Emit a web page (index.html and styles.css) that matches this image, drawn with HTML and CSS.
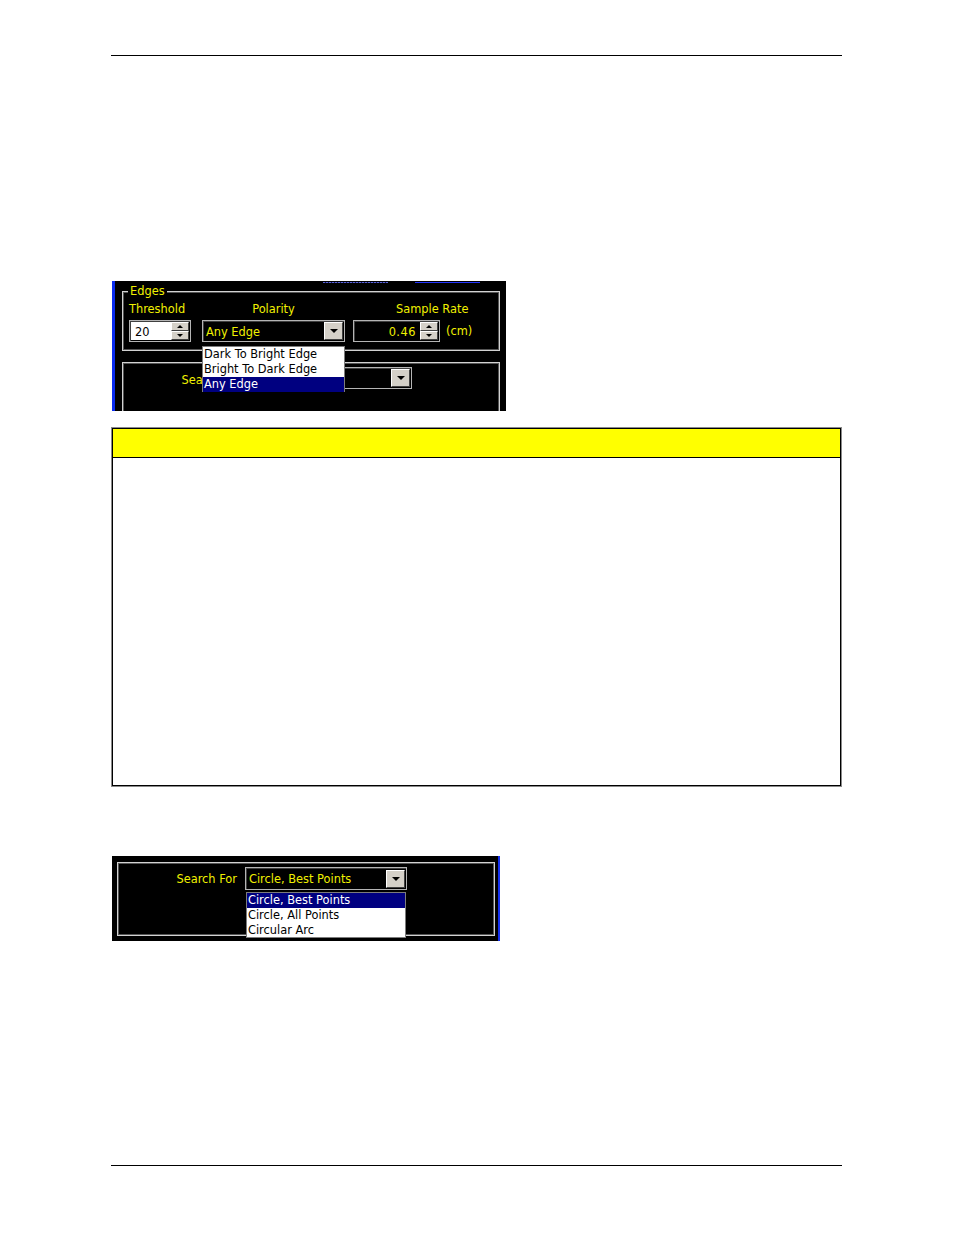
FILE: index.html
```html
<!DOCTYPE html>
<html>
<head>
<meta charset="utf-8">
<title>Edges settings</title>
<link rel="stylesheet" href="styles.css">
</head>
<body>
<div class="page">
  <div class="rule rule-top"></div>

  <div class="shot shot1">
    <div class="strip"><span class="frag frag-a"></span><span class="frag frag-b"></span></div>
    <fieldset class="group edges">
      <legend>Edges</legend>
      <div class="labels">
        <span class="lbl lbl-thr">Threshold</span>
        <span class="lbl lbl-pol">Polarity</span>
        <span class="lbl lbl-rate">Sample Rate</span>
      </div>
      <div class="controls">
        <div class="spin spin-white">
          <span class="spin-val">20</span>
          <div class="spin-btns"><span class="sbtn up"></span><span class="sbtn down"></span></div>
        </div>
        <div class="combo combo-pol">
          <span class="combo-val">Any Edge</span>
          <span class="dbtn"></span>
        </div>
        <div class="spin spin-black">
          <span class="spin-val">0.46</span>
          <div class="spin-btns"><span class="sbtn up"></span><span class="sbtn down"></span></div>
        </div>
        <span class="unit">(cm)</span>
      </div>
    </fieldset>
    <fieldset class="group search">
      <div class="srow">
        <span class="slabel slabel-low">Search For</span>
        <div class="combo combo-search">
          <span class="combo-val"></span>
          <span class="dbtn"></span>
        </div>
      </div>
    </fieldset>
    <ul class="droplist drop-pol">
      <li>Dark To Bright Edge</li>
      <li>Bright To Dark Edge</li>
      <li class="sel">Any Edge</li>
    </ul>
  </div>

  <div class="note">
    <div class="note-in">
      <div class="note-head"></div>
      <div class="note-body"></div>
    </div>
  </div>

  <div class="shot shot2">
    <fieldset class="group search2">
      <div class="srow">
        <span class="slabel">Search For</span>
        <div class="combo combo-search2">
          <span class="combo-val">Circle, Best Points</span>
          <span class="dbtn"></span>
        </div>
      </div>
    </fieldset>
    <ul class="droplist drop-search">
      <li class="sel">Circle, Best Points</li>
      <li>Circle, All Points</li>
      <li>Circular Arc</li>
    </ul>
  </div>

  <div class="rule rule-bottom"></div>
</div>
</body>
</html>
```

FILE: styles.css
```css
* { box-sizing: border-box; }

body {
  margin: 0;
  background: #ffffff;
  font-family: "DejaVu Sans", "Liberation Sans", sans-serif;
}

.page {
  width: 954px;
  padding-left: 111px;
  padding-top: 55px;
  padding-bottom: 60px;
}

.rule {
  width: 731px;
  height: 1px;
  background: #000;
}

.rule-bottom { margin-top: 224px; }

/* ---------- shared dialog pieces ---------- */
.shot {
  position: relative;
  background: #000;
  overflow: hidden;
  margin-left: 1px;
  font-size: 11.4px;
  line-height: 14px;
  color: #f0f000;
}

.group {
  margin: 0;
  min-width: 0;
  width: 378px;
  border: 1px solid #d2d2d2;
  box-shadow: inset 0 0 0 1px #555;
}

.group legend {
  padding: 0 2px;
  margin-left: -1px;
  background: #000;
  color: #f0f000;
  line-height: 14px;
}

.combo {
  display: flex;
  align-items: center;
  justify-content: space-between;
  height: 22px;
  background: #000;
  border: 1px solid #b4b4b4;
  box-shadow: inset 1px 1px 0 #404040;
  padding: 1px 1px 1px 3px;
}

.combo-val { color: #f0f000; white-space: nowrap; padding-top: 1px; }

.dbtn {
  position: relative;
  width: 19px;
  height: 18px;
  background: #d4d0c8;
  border: 1px solid;
  border-color: #ffffff #404040 #404040 #ffffff;
  display: flex;
  align-items: center;
  justify-content: center;
}

.dbtn::after {
  content: "";
  width: 0;
  height: 0;
  border-left: 4px solid transparent;
  border-right: 4px solid transparent;
  border-top: 4px solid #000;
}

.spin {
  display: flex;
  align-items: stretch;
  height: 22px;
  border: 1px solid #b4b4b4;
  box-shadow: inset 1px 1px 0 #404040;
  padding: 1px;
}

.spin-val { flex: 1; padding-top: 3px; }

.spin-white .spin-val {
  background: #fff;
  color: #000;
  padding-left: 4px;
}

.spin-black .spin-val {
  text-align: right;
  color: #f0f000;
  padding-right: 4px;
  letter-spacing: 0.5px;
}

.spin-btns {
  display: flex;
  flex-direction: column;
  width: 18px;
}

.sbtn {
  flex: 1;
  background: #d4d0c8;
  border: 1px solid;
  border-color: #ffffff #404040 #404040 #ffffff;
  display: flex;
  align-items: center;
  justify-content: center;
}

.sbtn::after {
  content: "";
  width: 0;
  height: 0;
  border-left: 3px solid transparent;
  border-right: 3px solid transparent;
}

.sbtn.up::after { border-bottom: 3px solid #000; }
.sbtn.down::after { border-top: 3px solid #000; }

.droplist {
  position: absolute;
  margin: 0;
  padding: 0;
  list-style: none;
  background: #fff;
  border: 1px solid #7c7c7c;
  color: #000;
  font-size: 11.4px;
}

.droplist li {
  height: 15px;
  line-height: 15px;
  padding-left: 1px;
  white-space: nowrap;
}

.droplist li.sel {
  background: #000080;
  color: #fff;
}

.srow {
  display: flex;
  align-items: center;
}

.slabel {
  width: 119px;
  text-align: right;
  white-space: nowrap;
  margin-right: 8px;
}

.slabel-low { padding-top: 3px; }

/* ---------- screenshot 1 ---------- */
.shot1 {
  margin-top: 225px;
  width: 394px;
  height: 130px;
  border-left: 3px solid #0a2cf0;
}

.strip {
  height: 3px;
  display: flex;
  align-items: flex-start;
}

.frag {
  display: block;
  height: 1px;
  margin-top: 1px;
}

.frag-a {
  width: 65px;
  margin-left: 208px;
  background: repeating-linear-gradient(90deg, #5a66d8 0 2px, #1a1a60 2px 3px);
}

.frag-b {
  width: 65px;
  margin-left: 27px;
  background: #2436ff;
}

.edges {
  margin-left: 7px;
  padding: 4px 6px 8px 6px;
}

.labels {
  display: flex;
  height: 14px;
}

.lbl { white-space: nowrap; }
.lbl-thr { width: 73px; }
.lbl-pol { width: 143px; text-align: center; }
.lbl-rate { margin-left: 51px; }

.controls {
  display: flex;
  align-items: center;
  margin-top: 4px;
}

.spin-white { width: 62px; }
.combo-pol { width: 143px; margin-left: 11px; }
.spin-black { width: 87px; margin-left: 8px; }
.unit { margin-left: 6px; }

.search {
  margin-left: 7px;
  margin-top: 11px;
  height: 80px;
  padding: 4px 0 0 0;
}

.combo-search { width: 162px; }

.drop-pol {
  left: 87px;
  top: 65px;
  width: 143px;
  height: 46px;
}

/* ---------- note box ---------- */
.note {
  margin-top: 16px;
  width: 731px;
  height: 360px;
  border: 1px solid #8a8a8a;
}

.note-in {
  height: 100%;
  border: 1px solid #000;
  display: flex;
  flex-direction: column;
}

.note-head {
  height: 29px;
  background: #ffff00;
  border-bottom: 1px solid #000;
}

.note-body {
  flex: 1;
  background: #fff;
}

/* ---------- screenshot 2 ---------- */
.shot2 {
  margin-top: 69px;
  width: 388px;
  height: 85px;
  border-right: 2px solid #1430f0;
}

.search2 {
  margin: 6px 0 0 5px;
  height: 74px;
  padding: 4px 0 0 0;
}

.combo-search2 { width: 162px; height: 23px; }

.drop-search {
  left: 134px;
  top: 36px;
  width: 160px;
  height: 46px;
}
```
